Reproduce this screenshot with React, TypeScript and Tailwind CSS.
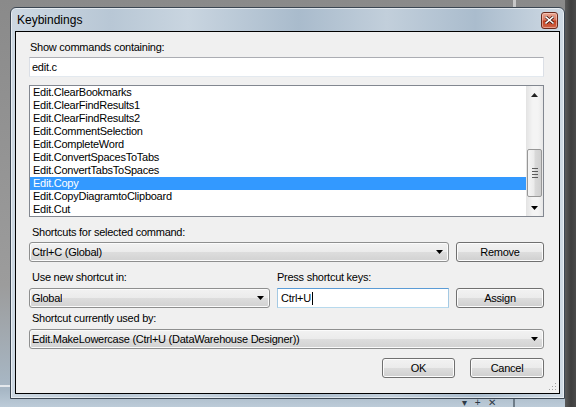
import React from 'react';

const commands = [
  'Edit.ClearBookmarks',
  'Edit.ClearFindResults1',
  'Edit.ClearFindResults2',
  'Edit.CommentSelection',
  'Edit.CompleteWord',
  'Edit.ConvertSpacesToTabs',
  'Edit.ConvertTabsToSpaces',
  'Edit.Copy',
  'Edit.CopyDiagramtoClipboard',
  'Edit.Cut',
];

const selected = 'Edit.Copy';

const font = "font-['Liberation_Sans',Arial,sans-serif]";

function Label({ children, className = '' }: { children: React.ReactNode; className?: string }) {
  return <div className={`h-[13px] text-[11px] leading-[13px] text-black ${className}`}>{children}</div>;
}

function DownArrow() {
  return (
    <svg width="7" height="4" viewBox="0 0 7 4">
      <polygon points="0,0 7,0 3.5,4" fill="#000" />
    </svg>
  );
}

function ComboBox({ value, className = '' }: { value: string; className?: string }) {
  return (
    <div
      className={`flex h-[20px] items-center justify-between rounded-[3px] border border-[#8e8f8f] bg-[linear-gradient(#f2f2f2_0%,#ebebeb_50%,#dddddd_51%,#d2d2d2_100%)] pl-[2px] pr-[5px] text-[11px] text-black shadow-[inset_0_0_0_1px_#fbfbfb] ${className}`}
    >
      <span className="truncate">{value}</span>
      <DownArrow />
    </div>
  );
}

function Button({ children, className = '' }: { children: React.ReactNode; className?: string }) {
  return (
    <button
      className={`flex h-[20px] items-center justify-center rounded-[3px] border border-[#707070] bg-[linear-gradient(#f2f2f2_0%,#ebebeb_50%,#dddddd_51%,#cfcfcf_100%)] text-[11px] text-black shadow-[inset_0_0_0_1px_#fcfcfc] ${className}`}
    >
      {children}
    </button>
  );
}

function ScrollBar() {
  return (
    <div className="flex w-[17px] flex-col bg-[linear-gradient(90deg,#e3e3e3,#f4f4f4_40%,#f4f4f4_70%,#e8e8e8)]">
      <div className="flex h-[17px] items-center justify-center">
        <svg width="7" height="4" viewBox="0 0 7 4">
          <polygon points="0,4 7,4 3.5,0" fill="#222" />
        </svg>
      </div>
      <div className="h-[46px]" />
      <div className="mx-[1px] flex h-[48px] flex-col items-center justify-center gap-[2px] rounded-[2px] border border-[#979797] bg-[linear-gradient(90deg,#f5f5f5,#ebebeb_45%,#d9d9d9_55%,#cfcfcf)]">
        <div className="h-[1px] w-[6px] bg-[#5c5c5c]" />
        <div className="h-[1px] w-[6px] bg-[#5c5c5c]" />
        <div className="h-[1px] w-[6px] bg-[#5c5c5c]" />
        <div className="h-[1px] w-[6px] bg-[#5c5c5c]" />
      </div>
      <div className="flex-1" />
      <div className="flex h-[17px] items-center justify-center">
        <DownArrow />
      </div>
    </div>
  );
}

export default function App() {
  return (
    <div
      className={`relative h-[407px] w-[576px] overflow-hidden bg-[linear-gradient(90deg,transparent_565px,#5a5a5a_565px,#3e3e3e_571px,#4a4a4a_576px),linear-gradient(#8a8a8a,#9c9c9c_70%,#a8b8c6_96%,#bccbd8)] pl-[10px] pt-[7px] tracking-[-0.25px] ${font}`}
    >
      {/* background window edges */}
      <div className="absolute left-[513px] top-0 h-[8px] w-[3px] bg-[#c8c8c8]" />
      <div className="absolute left-[513px] top-[399px] h-[8px] w-[2px] bg-[#6e7c88]" />
      <div className="absolute left-0 top-[385px] h-[2px] w-[10px] bg-[#e4e8ec]" />
      <div className="absolute left-[462px] top-[398px] flex gap-[8px] text-[10px] leading-[9px] text-[#2e3a46]">
        <span>▾</span>
        <span>+</span>
        <span>✕</span>
      </div>

      {/* dialog window */}
      <div className="relative flex h-[392px] w-[555px] flex-col rounded-t-[6px] border border-[#3b4652] bg-[linear-gradient(90deg,#cdd8e2_0%,#b8c7d5_18%,#c9d5e0_32%,#a9bbcc_52%,#c2cfdb_68%,#aabccd_84%,#cfdae4_100%)] shadow-[inset_0_0_0_1px_rgba(255,255,255,0.55)]">
        {/* title bar */}
        <div className="flex h-[23px] items-center justify-between pl-[6px] pr-[6px]">
          <span className="text-[12px] leading-[14px] tracking-normal text-black">Keybindings</span>
          <div className="mt-[1px] flex h-[17px] w-[17px] items-center justify-center rounded-[3px] border border-[#6b2a1c] bg-[linear-gradient(#e9a995_0%,#d9775f_45%,#c2401f_55%,#d0664a_100%)] shadow-[inset_0_0_0_1px_rgba(255,220,210,0.5)]">
            <svg width="9" height="8" viewBox="0 0 9 8">
              <path d="M1 1 L8 7 M8 1 L1 7" stroke="#3a1008" strokeWidth="3" strokeLinecap="square" />
              <path d="M1 1 L8 7 M8 1 L1 7" stroke="#ffffff" strokeWidth="1.6" strokeLinecap="square" />
            </svg>
          </div>
        </div>

        {/* client area */}
        <div className="mx-[4px] flex h-[363px] w-[545px] flex-col border border-black bg-[#f0f0f0] pl-[13px] pr-[15px] pt-[9px] text-[11px]">
          <Label className="pl-[1px]">Show commands containing:</Label>
          <div className="mt-[3px] flex h-[20px] items-center border border-[#abadb3] border-b-[#e3e9ef] border-l-[#dbdfe6] border-r-[#dbdfe6] bg-white pl-[2px]">
            edit.c
          </div>

          {/* command list */}
          <div className="mt-[8px] flex h-[132px] border border-[#828790] bg-white">
            <div className="flex-1">
              {commands.map((c) => (
                <div
                  key={c}
                  className={`h-[13px] pl-[3px] leading-[13px] ${
                    c === selected ? 'bg-[#3399ff] text-white' : 'text-black'
                  }`}
                >
                  {c}
                </div>
              ))}
            </div>
            <ScrollBar />
          </div>

          <Label className="mt-[9px] pl-[3px]">Shortcuts for selected command:</Label>
          <div className="mt-[3px] flex gap-[7px]">
            <ComboBox value="Ctrl+C (Global)" className="flex-1" />
            <Button className="w-[88px]">Remove</Button>
          </div>

          <div className="mt-[9px] flex gap-[7px]">
            <Label className="w-[241px] pl-[3px]">Use new shortcut in:</Label>
            <Label>Press shortcut keys:</Label>
          </div>
          <div className="mt-[4px] flex gap-[7px]">
            <ComboBox value="Global" className="w-[241px]" />
            <div className="flex h-[20px] w-[172px] items-center border border-[#5b9bd5] border-b-[#b7d9ed] border-l-[#a4c9e3] border-r-[#a4c9e3] bg-white pl-[3px]">
              Ctrl+U
              <span className="ml-[1px] h-[13px] w-[1px] bg-black" />
            </div>
            <Button className="w-[88px]">Assign</Button>
          </div>

          <Label className="mt-[4px] pl-[3px]">Shortcut currently used by:</Label>
          <ComboBox
            value="Edit.MakeLowercase (Ctrl+U (DataWarehouse Designer))"
            className="mt-[4px]"
          />

          <div className="mt-[9px] flex justify-end gap-[15px]">
            <Button className="w-[73px]">OK</Button>
            <Button className="w-[74px]">Cancel</Button>
          </div>

          {/* size grip */}
          <div className="relative flex-1">
            <svg className="absolute bottom-[2px] right-[-13px]" width="8" height="8" viewBox="0 0 8 8">
              <rect x="6" y="0" width="1" height="1" fill="#a0a0a0" />
              <rect x="3" y="3" width="1" height="1" fill="#a0a0a0" />
              <rect x="6" y="3" width="1" height="1" fill="#a0a0a0" />
              <rect x="0" y="6" width="1" height="1" fill="#a0a0a0" />
              <rect x="3" y="6" width="1" height="1" fill="#a0a0a0" />
              <rect x="6" y="6" width="1" height="1" fill="#a0a0a0" />
            </svg>
          </div>
        </div>
      </div>
    </div>
  );
}
